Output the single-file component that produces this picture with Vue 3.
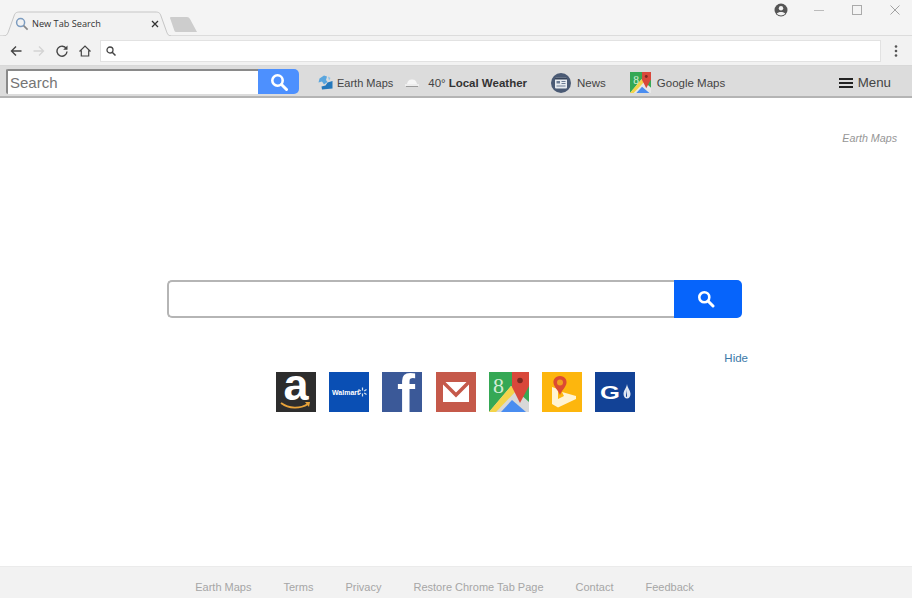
<template>
  <div class="page">
    <div class="tabstrip">
      <div class="tab">
        <svg class="tab_shape" width="168" height="25" viewBox="0 0 168 25">
          <path d="M0.5 25 C4 25 5 22 6 19 L11 5 C12 2 13 1 17 1 L152 1 C156 1 157 2 158 5 L163 19 C164 22 165 25 168 25" fill="#f2f2f2" stroke="#c6c6c6" />
        </svg>
        <svg class="tab_icon" width="14" height="14" viewBox="0 0 14 14">
          <circle cx="5.6" cy="5.6" r="4" fill="none" stroke="#7c9cc0" stroke-width="1.5" />
          <path d="M8.6 8.6 L12.6 12.6" stroke="#888" stroke-width="1.7" />
        </svg>
        <span class="tab_title">New Tab Search</span>
        <svg class="tab_close" width="8" height="8" viewBox="0 0 8 8">
          <path d="M1 1 L7 7 M7 1 L1 7" stroke="#333" stroke-width="1.3" />
        </svg>
      </div>
      <svg class="new_tab" width="28" height="15" viewBox="0 0 28 15">
        <path d="M0 1 Q0 0 1 0 L17 0 Q19 0 20 2 L27 15 L6 15 Q5 15 4.500 14 Z" fill="#cdcdcd" />
      </svg>
      <div class="win_controls">
        <svg class="profile" width="14" height="14" viewBox="0 0 14 14">
          <circle cx="7" cy="7" r="6.500" fill="#555" />
          <circle cx="7" cy="5.300" r="2.200" fill="#f2f2f2" />
          <path d="M2.800 10.500 C4 8.400 10 8.400 11.200 10.500 C10 12 8.500 12.400 7 12.400 C5.500 12.400 4 12 2.800 10.500 Z" fill="#f2f2f2" />
        </svg>
        <svg class="win_btn" width="10" height="10" viewBox="0 0 10 10">
          <path d="M0 5.500 H10" stroke="#bbb" stroke-width="1" />
        </svg>
        <svg class="win_btn" width="10" height="10" viewBox="0 0 10 10">
          <rect x="0.500" y="0.500" width="9" height="9" fill="none" stroke="#aaa" />
        </svg>
        <svg class="win_btn" width="10" height="10" viewBox="0 0 10 10">
          <path d="M0.500 0.500 L9.500 9.500 M9.500 0.500 L0.500 9.500" stroke="#999" stroke-width="0.900" />
        </svg>
      </div>
    </div>

    <div class="toolbar">
      <svg class="nav_icon" width="12" height="12" viewBox="0 0 12 12">
        <path d="M11.500 6 H1.500 M6 1.500 L1.500 6 L6 10.500" fill="none" stroke="#444" stroke-width="1.400" />
      </svg>
      <svg class="nav_icon" width="12" height="12" viewBox="0 0 12 12">
        <path d="M0.500 6 H10.500 M6 1.500 L10.500 6 L6 10.500" fill="none" stroke="#d4d4d4" stroke-width="1.400" />
      </svg>
      <svg class="nav_icon" width="12" height="12" viewBox="0 0 12 12">
        <path d="M10.300 3.600 A5 5 0 1 0 11 6.500" fill="none" stroke="#444" stroke-width="1.400" />
        <path d="M11.500 0.500 V4.800 H7.200 Z" fill="#444" />
      </svg>
      <svg class="nav_icon" width="12" height="12" viewBox="0 0 12 12">
        <path d="M0.500 6.500 L6 1 L11.500 6.500 M2.300 5.500 V11 H9.700 V5.500" fill="none" stroke="#444" stroke-width="1.200" />
      </svg>
      <div class="omnibox">
        <svg width="10" height="10" viewBox="0 0 10 10">
          <circle cx="4" cy="4" r="3" fill="none" stroke="#444" stroke-width="1.300" />
          <path d="M6.200 6.200 L9.500 9.500" stroke="#444" stroke-width="1.500" />
        </svg>
      </div>
      <svg class="dots" width="4" height="12" viewBox="0 0 4 12">
        <circle cx="2" cy="1.500" r="1.300" fill="#555" />
        <circle cx="2" cy="6" r="1.300" fill="#555" />
        <circle cx="2" cy="10.500" r="1.300" fill="#555" />
      </svg>
    </div>

    <div class="ext_bar">
      <div class="ext_search">
        <input class="ext_input" type="text" placeholder="Search" />
        <div class="ext_btn">
          <svg width="18" height="18" viewBox="0 0 18 18">
            <circle cx="7.500" cy="7.500" r="5.200" fill="none" stroke="#fff" stroke-width="2.600" />
            <path d="M11.500 11.500 L16.500 16.500" stroke="#fff" stroke-width="3" stroke-linecap="round" />
          </svg>
        </div>
      </div>
      <div class="ext_item earth">
        <svg width="15" height="15" viewBox="0 0 15 15">
          <path d="M6 0.500 L9 1.500 L8 5 L9.500 7 L6 9.500 L4 6.500 L0.500 7.500 L1.500 3.500 Z" fill="#5aa6de" />
          <path d="M9.500 7.500 L14.500 6 L14.500 13.500 L4 14.500 L3.500 11.500 L7.500 10.500 Z" fill="#2478bc" />
          <path d="M10 1.500 L12.500 3 L11 5.500 Z" fill="#8cc4ea" />
        </svg>
        <span>Earth Maps</span>
      </div>
      <div class="ext_item weather">
        <svg width="14" height="8" viewBox="0 0 14 8">
          <path d="M2 5 C3 1 5 0.500 7 0.500 C9 0.500 11 1 12 5 Z" fill="#f6f6f6" />
          <path d="M0 6 H14" stroke="#fff" stroke-width="1" />
          <path d="M1 7.500 H13" stroke="#8a8a8a" stroke-width="0.800" />
        </svg>
        <span class="temp">40°</span>
        <b>Local Weather</b>
      </div>
      <div class="ext_item news">
        <svg width="20" height="20" viewBox="0 0 20 20">
          <circle cx="10" cy="10" r="10" fill="#4a5a74" />
          <rect x="4" y="4.500" width="12" height="11" rx="1" fill="#e8ecf0" />
          <rect x="4" y="4.500" width="12" height="2" fill="#36445a" />
          <rect x="5.500" y="8" width="3.500" height="2.500" fill="#6d7d94" />
          <path d="M10.500 8.500 H14.500 M10.500 10.500 H14.500 M5.500 13 H14.500" stroke="#6d7d94" />
        </svg>
        <span>News</span>
      </div>
      <div class="ext_item gmaps">
        <svg width="21" height="21" viewBox="0 0 40 40">
          <rect width="40" height="40" fill="#35a855" />
          <path d="M0 40 L22 14 L40 30 V40 Z" fill="#e8e8e8" />
          <path d="M0 40 L22 14 L27 19 L7 40 Z" fill="#f4d44a" />
          <path d="M12 40 L23 28 L37 40 Z" fill="#4a8df0" />
          <path d="M23 0 H40 V14 L31 31 L23 15 Z" fill="#d9483b" />
          <circle cx="31" cy="8.500" r="2.800" fill="#7c2a22" />
          <text class="g8" x="6" y="22">8</text>
        </svg>
        <span>Google Maps</span>
      </div>
      <div class="ext_menu">
        <span class="burger"></span>
        <span>Menu</span>
      </div>
    </div>

    <div class="main">
      <div class="brand">Earth Maps</div>
      <div class="search_row">
        <input class="search_input" type="text" />
        <div class="search_btn">
          <svg width="18" height="18" viewBox="0 0 18 18">
            <circle cx="7.300" cy="7.300" r="5" fill="none" stroke="#fff" stroke-width="2.600" />
            <path d="M11 11 L16 16" stroke="#fff" stroke-width="3" stroke-linecap="round" />
          </svg>
        </div>
      </div>
      <div class="hide_row"><a class="hide">Hide</a></div>
      <div class="tiles">
        <svg class="letter_tile" width="40" height="40" viewBox="0 0 40 40">
          <rect width="40" height="40" fill="#2d2d2d" />
          <text class="amazon" x="20" y="28">a</text>
          <path d="M5 31 C13 37 24 37 32 32" fill="none" stroke="#e8a33a" stroke-width="1.800" />
          <path d="M29 30 L34 30 L33 35 Z" fill="#e8a33a" />
        </svg>
        <svg width="40" height="40" viewBox="0 0 40 40">
          <rect width="40" height="40" fill="#0a4fb4" />
          <text class="walmart" x="3" y="22.500">Walmart</text>
          <path d="M33.500 15.500 V18.500 M33.500 21.500 V24.500 M29.500 17.500 L31.800 19 M37.500 17.500 L35.200 19 M29.500 22.500 L31.800 21 M37.500 22.500 L35.200 21" stroke="#d6e4ee" stroke-width="1.200" />
        </svg>
        <svg class="letter_tile" width="40" height="40" viewBox="0 0 40 40">
          <rect width="40" height="40" fill="#3b5998" />
          <text class="fb" x="15" y="40">f</text>
        </svg>
        <svg width="40" height="40" viewBox="0 0 40 40">
          <rect width="40" height="40" fill="#c5594a" />
          <rect x="7" y="10" width="26" height="20" fill="#fff" />
          <path d="M7 10 L20 23 L33 10" fill="none" stroke="#c5594a" stroke-width="3.500" />
        </svg>
        <svg width="40" height="40" viewBox="0 0 40 40">
          <rect width="40" height="40" fill="#35a855" />
          <path d="M0 40 L22 14 L40 30 V40 Z" fill="#d8d8d8" />
          <path d="M0 40 L22 14 L27 19 L7 40 Z" fill="#f4d44a" />
          <path d="M12 40 L23 28 L37 40 Z" fill="#4a8df0" />
          <path d="M23 0 H40 V14 L31 31 L23 15 Z" fill="#d9483b" />
          <circle cx="31" cy="8.500" r="2.800" fill="#7c2a22" />
          <text class="g8" x="4" y="21">8</text>
        </svg>
        <svg width="40" height="40" viewBox="0 0 40 40">
          <rect width="40" height="40" fill="#fdb60d" />
          <path d="M10 15 L16 17 V27 L22 24 L20 20 L34 24 V27 L16 35.500 L10 32 Z" fill="#fff3d2" />
          <path d="M18 4 C13 4 11 8 11.500 11 C12 15 16 18 18 23 C20 18 24 15 24.500 11 C25 8 23 4 18 4 Z" fill="#dc4a32" />
          <circle cx="18" cy="10.500" r="3" fill="#f0a020" />
        </svg>
        <svg width="40" height="40" viewBox="0 0 40 40">
          <rect width="40" height="40" fill="#124296" />
          <text class="gas" x="0" y="0" transform="translate(5 27) scale(1.350 1)">G</text>
          <path d="M32 12 C31.500 16 28.500 18.500 28.500 22 C28.500 24.500 30 26.500 32 26.500 C34 26.500 35.500 24.500 35.500 22 C35.500 18.500 32.500 16 32 12 Z" fill="#dfe6f2" />
          <path d="M32 17 C32 20 31 22 31 23.500 C31 24.500 31.500 25 32 25 Z" fill="#124296" />
        </svg>
      </div>
    </div>

    <div class="footer">
      <a v-for="link in footer_links" :key="link">{{ link }}</a>
    </div>
  </div>
</template>

<script setup>
const footer_links = [
  "Earth Maps",
  "Terms",
  "Privacy",
  "Restore Chrome Tab Page",
  "Contact",
  "Feedback",
];
</script>

<style>
body {
  margin: 0;
}
</style>

<style scoped>
.page {
  width: 912px;
  height: 598px;
  display: flex;
  flex-direction: column;
  overflow: hidden;
  background-color: #fff;
  font-family: "Liberation Sans", Arial, sans-serif;
}
.tabstrip {
  height: 36px;
  flex-shrink: 0;
  display: flex;
  align-items: flex-end;
  padding-left: 3px;
  box-sizing: border-box;
  background-color: #f4f4f4;
  border-bottom: 1px solid #dcdcdc;
  position: relative;
}
.tab {
  width: 168px;
  height: 25px;
  position: relative;
  margin-bottom: -1px;
  display: flex;
  align-items: center;
  padding: 0 12px 0 12px;
  box-sizing: border-box;
}
.tab_shape {
  position: absolute;
  left: 0;
  top: 0;
}
.tab_icon,
.tab_title,
.tab_close {
  position: relative;
}
.tab_title {
  margin-left: 3px;
  flex: 1;
  font-family: "Open Sans", sans-serif;
  font-size: 9.200px;
  color: #333;
}
.new_tab {
  margin: 0 0 3px -1px;
}
.win_controls {
  position: absolute;
  right: 12px;
  top: 3px;
  display: flex;
  align-items: center;
  gap: 28px;
}
.profile {
  margin-right: -2px;
}
.toolbar {
  height: 30px;
  flex-shrink: 0;
  display: flex;
  align-items: center;
  padding: 0 14px 0 10px;
  box-sizing: border-box;
  background-color: #f2f2f2;
  border-bottom: 1px solid #d8d8d8;
}
.nav_icon {
  margin-right: 11px;
}
.omnibox {
  flex: 1;
  height: 22px;
  margin: 0 13px 0 -2px;
  padding-left: 5px;
  display: flex;
  align-items: center;
  box-sizing: border-box;
  background-color: #fff;
  border: 1px solid #e2e2e2;
}
.ext_bar {
  height: 32px;
  flex-shrink: 0;
  display: flex;
  align-items: center;
  padding: 1px 21px 0 6px;
  box-sizing: border-box;
  background-color: #dcdcdc;
  border-bottom: 2px solid #b4b4b4;
  font-size: 11.500px;
  color: #444;
}
.ext_search {
  width: 293px;
  height: 25px;
  display: flex;
  flex-shrink: 0;
}
.ext_input {
  flex: 1;
  min-width: 0;
  padding: 0 2px;
  box-sizing: border-box;
  font-family: inherit;
  font-size: 15px;
  background-color: #fff;
  border: 0;
  border-top: 2px solid #8a8a8a;
  border-left: 2px solid #8a8a8a;
  border-radius: 2px 0 0 2px;
  outline: none;
}
.ext_input::placeholder {
  color: #757575;
}
.ext_btn {
  width: 41px;
  display: flex;
  align-items: center;
  justify-content: center;
  background-color: #4d90fe;
  border-radius: 0 5px 5px 0;
}
.ext_item {
  display: flex;
  align-items: center;
  padding-top: 2px;
}
.earth {
  margin-left: 19px;
  gap: 4px;
  font-size: 11px;
}
.weather {
  margin-left: 12px;
  gap: 9px;
}
.temp {
  margin-right: -6px;
}
.weather b {
  color: #333;
}
.news {
  margin-left: 24px;
  gap: 6px;
}
.gmaps {
  margin-left: 24px;
  gap: 6px;
}
.ext_menu {
  margin-left: auto;
  display: flex;
  align-items: center;
  gap: 5px;
  font-size: 13.300px;
  padding-top: 2px;
}
.burger {
  width: 14px;
  height: 2px;
  border-top: 2px solid #222;
  border-bottom: 2px solid #222;
  padding: 2px 0;
  background-clip: content-box;
  background-color: #222;
}
.g8 {
  font-family: "Liberation Serif", serif;
  font-size: 22px;
  fill: #d4ecd6;
}
.main {
  flex: 1;
  display: flex;
  flex-direction: column;
  align-items: center;
}
.brand {
  align-self: flex-end;
  margin: 34px 15px 0 0;
  font-size: 10.700px;
  line-height: 13px;
  font-style: italic;
  color: #969696;
}
.search_row {
  width: 575px;
  height: 38px;
  margin: 135px 4px 0 0;
  display: flex;
}
.search_input {
  flex: 1;
  min-width: 0;
  box-sizing: border-box;
  background-color: #fff;
  border: 2px solid #b5b5b5;
  border-right: 0;
  border-radius: 5px 0 0 5px;
  outline: none;
}
.search_btn {
  width: 68px;
  display: flex;
  align-items: center;
  justify-content: center;
  background-color: #0664fb;
  border-radius: 0 5px 5px 0;
}
.search_btn svg {
  margin-left: -3px;
}
.hide_row {
  width: 582px;
  margin: 34px 0 0 2px;
  font-size: 11.500px;
  line-height: 13px;
  text-align: right;
}
.hide {
  color: #3b79a8;
}
.tiles {
  margin: 7px 1px 0 0;
  display: flex;
  gap: 13.200px;
}
.letter_tile {
  overflow: visible;
}
.amazon {
  font-family: "Liberation Sans", sans-serif;
  font-size: 45px;
  font-weight: bold;
  text-anchor: middle;
  fill: #fff;
}
.walmart {
  font-family: "Liberation Sans", sans-serif;
  font-size: 7px;
  font-weight: bold;
  fill: #fff;
}
.fb {
  font-family: "Liberation Sans", sans-serif;
  font-size: 54px;
  font-weight: bold;
  fill: #fff;
}
.gas {
  font-family: "Liberation Sans", sans-serif;
  font-size: 19px;
  font-weight: bold;
  fill: #fff;
}
.footer {
  height: 32px;
  flex-shrink: 0;
  display: flex;
  align-items: center;
  justify-content: center;
  gap: 32px;
  padding: 9px 23px 0 0;
  box-sizing: border-box;
  background-color: #f2f2f2;
  border-top: 1px solid #ebebeb;
  font-size: 11px;
  color: #a6a6a6;
}
</style>
